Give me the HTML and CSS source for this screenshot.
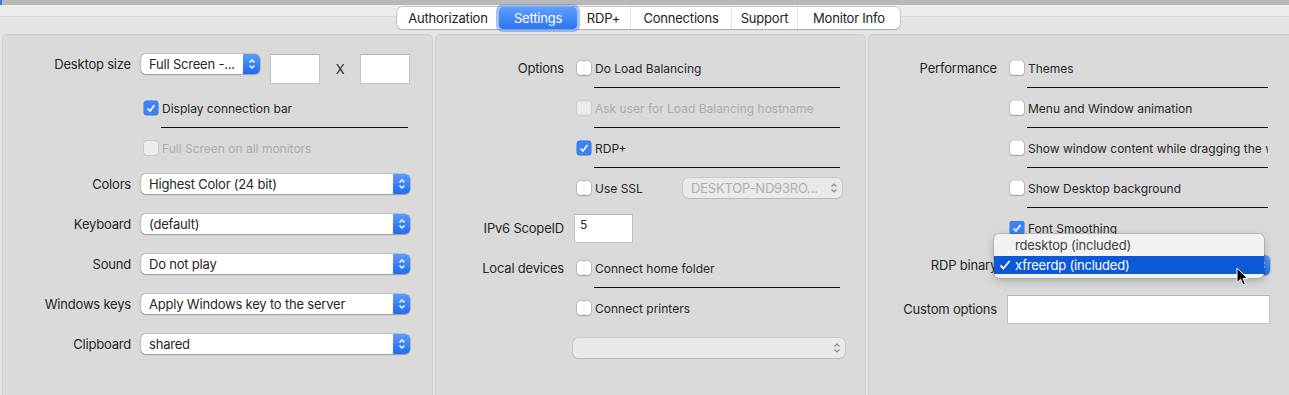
FILE: index.html
```html
<!DOCTYPE html>
<html>
<head>
<meta charset="utf-8">
<link rel="stylesheet" href="styles.css">
<title>Settings</title>
</head>
<body>
<div class="topbar"></div>
<div class="header">
  <div class="tabs">
    <div class="tab w-auth">Authorization</div>
    <div class="tab w-set sel">Settings</div>
    <div class="tab w-rdp nosep">RDP+</div>
    <div class="tab w-con">Connections</div>
    <div class="tab w-sup">Support</div>
    <div class="tab w-mon">Monitor Info</div>
  </div>
</div>

<div class="panels">
  <!-- left: display -->
  <div class="panel left">
    <div class="row first">
      <div class="lbl">Desktop size</div>
      <div class="ctl top">
        <div class="popup short"><span class="val">Full Screen -...</span><span class="arr"><svg width="8" height="12" viewBox="0 0 8 12"><path d="M1.5 4.5 L4 2 L6.5 4.5 M1.5 7.5 L4 10 L6.5 7.5" fill="none" stroke="#fff" stroke-width="1.3"/></svg></span></div>
        <div class="field size"></div>
        <div class="times">X</div>
        <div class="field size"></div>
      </div>
    </div>
    <div class="row ruled">
      <div class="lbl"></div>
      <div class="ctl"><div class="check on"><span class="box"><svg width="12" height="12" viewBox="0 0 12 12"><path d="M2.5 6.5 L5 9 L9.5 3" fill="none" stroke="#fff" stroke-width="1.7"/></svg></span>Display connection bar</div></div>
    </div>
    <div class="row short-row">
      <div class="lbl"></div>
      <div class="ctl"><div class="check dis"><span class="box"></span>Full Screen on all monitors</div></div>
    </div>
    <div class="row">
      <div class="lbl">Colors</div>
      <div class="ctl"><div class="popup"><span class="val">Highest Color (24 bit)</span><span class="arr"><svg width="8" height="12" viewBox="0 0 8 12"><path d="M1.5 4.5 L4 2 L6.5 4.5 M1.5 7.5 L4 10 L6.5 7.5" fill="none" stroke="#fff" stroke-width="1.3"/></svg></span></div></div>
    </div>
    <div class="row">
      <div class="lbl">Keyboard</div>
      <div class="ctl"><div class="popup"><span class="val">(default)</span><span class="arr"><svg width="8" height="12" viewBox="0 0 8 12"><path d="M1.5 4.5 L4 2 L6.5 4.5 M1.5 7.5 L4 10 L6.5 7.5" fill="none" stroke="#fff" stroke-width="1.3"/></svg></span></div></div>
    </div>
    <div class="row">
      <div class="lbl">Sound</div>
      <div class="ctl"><div class="popup"><span class="val">Do not play</span><span class="arr"><svg width="8" height="12" viewBox="0 0 8 12"><path d="M1.5 4.5 L4 2 L6.5 4.5 M1.5 7.5 L4 10 L6.5 7.5" fill="none" stroke="#fff" stroke-width="1.3"/></svg></span></div></div>
    </div>
    <div class="row">
      <div class="lbl">Windows keys</div>
      <div class="ctl"><div class="popup"><span class="val">Apply Windows key to the server</span><span class="arr"><svg width="8" height="12" viewBox="0 0 8 12"><path d="M1.5 4.5 L4 2 L6.5 4.5 M1.5 7.5 L4 10 L6.5 7.5" fill="none" stroke="#fff" stroke-width="1.3"/></svg></span></div></div>
    </div>
    <div class="row">
      <div class="lbl">Clipboard</div>
      <div class="ctl"><div class="popup"><span class="val">shared</span><span class="arr"><svg width="8" height="12" viewBox="0 0 8 12"><path d="M1.5 4.5 L4 2 L6.5 4.5 M1.5 7.5 L4 10 L6.5 7.5" fill="none" stroke="#fff" stroke-width="1.3"/></svg></span></div></div>
    </div>
  </div>

  <!-- middle: options -->
  <div class="panel mid">
    <div class="row ruled">
      <div class="lbl">Options</div>
      <div class="ctl"><div class="check"><span class="box"></span>Do Load Balancing</div></div>
    </div>
    <div class="row ruled">
      <div class="lbl"></div>
      <div class="ctl"><div class="check dis"><span class="box"></span>Ask user for Load Balancing hostname</div></div>
    </div>
    <div class="row ruled">
      <div class="lbl"></div>
      <div class="ctl"><div class="check on"><span class="box"><svg width="12" height="12" viewBox="0 0 12 12"><path d="M2.5 6.5 L5 9 L9.5 3" fill="none" stroke="#fff" stroke-width="1.7"/></svg></span>RDP+</div></div>
    </div>
    <div class="row">
      <div class="lbl"></div>
      <div class="ctl">
        <div class="check"><span class="box"></span>Use SSL</div>
        <div class="popup dis ssl"><span class="val">DESKTOP-ND93RO...</span><span class="arr"><svg width="8" height="12" viewBox="0 0 8 12"><path d="M1.5 4.5 L4 2 L6.5 4.5 M1.5 7.5 L4 10 L6.5 7.5" fill="none" stroke="#8a8a8a" stroke-width="1.1"/></svg></span></div>
      </div>
    </div>
    <div class="row">
      <div class="lbl">IPv6 ScopeID</div>
      <div class="ctl"><div class="field scope">5</div></div>
    </div>
    <div class="row ruled">
      <div class="lbl">Local devices</div>
      <div class="ctl"><div class="check"><span class="box"></span>Connect home folder</div></div>
    </div>
    <div class="row">
      <div class="lbl"></div>
      <div class="ctl"><div class="check"><span class="box"></span>Connect printers</div></div>
    </div>
    <div class="row">
      <div class="lbl"></div>
      <div class="ctl"><div class="popup dis wide"><span class="val"></span><span class="arr"><svg width="8" height="12" viewBox="0 0 8 12"><path d="M1.5 4.5 L4 2 L6.5 4.5 M1.5 7.5 L4 10 L6.5 7.5" fill="none" stroke="#8a8a8a" stroke-width="1.1"/></svg></span></div></div>
    </div>
  </div>

  <!-- right: performance -->
  <div class="panel right">
    <div class="row ruled">
      <div class="lbl">Performance</div>
      <div class="ctl"><div class="check"><span class="box"></span>Themes</div></div>
    </div>
    <div class="row ruled">
      <div class="lbl"></div>
      <div class="ctl"><div class="check"><span class="box"></span>Menu and Window animation</div></div>
    </div>
    <div class="row ruled">
      <div class="lbl"></div>
      <div class="ctl"><div class="check"><span class="box"></span>Show window content while dragging the window</div></div>
    </div>
    <div class="row ruled">
      <div class="lbl"></div>
      <div class="ctl"><div class="check"><span class="box"></span>Show Desktop background</div></div>
    </div>
    <div class="row">
      <div class="lbl"></div>
      <div class="ctl"><div class="check on"><span class="box"><svg width="12" height="12" viewBox="0 0 12 12"><path d="M2.5 6.5 L5 9 L9.5 3" fill="none" stroke="#fff" stroke-width="1.7"/></svg></span>Font Smoothing</div></div>
    </div>
    <div class="row binary-row">
      <div class="lbl">RDP binary</div>
      <div class="ctl"><div class="popup"><span class="val">xfreerdp (included)</span><span class="arr"><svg width="8" height="12" viewBox="0 0 8 12"><path d="M1.5 4.5 L4 2 L6.5 4.5 M1.5 7.5 L4 10 L6.5 7.5" fill="none" stroke="#fff" stroke-width="1.3"/></svg></span></div></div>
    </div>
    <div class="row custom-row">
      <div class="lbl">Custom options</div>
      <div class="ctl"><div class="field custom"></div></div>
    </div>
  </div>
</div>

<!-- open popup menu for RDP binary -->
<div class="menu">
  <div class="item"><span class="mark"></span>rdesktop (included)</div>
  <div class="item hi"><span class="mark"><svg width="12" height="12" viewBox="0 0 12 12"><path d="M1.5 6.5 L4.5 9.5 L10.5 2" fill="none" stroke="#fff" stroke-width="1.8"/></svg></span>xfreerdp (included)</div>
</div>

<svg class="cursor" width="13" height="20" viewBox="0 0 13 20"><path d="M1 1 L1 15.5 L4.6 12.2 L7 17.8 L9.3 16.8 L7 11.4 L11.6 11.4 Z" fill="#000" stroke="#fff" stroke-width="1"/></svg>
</body>
</html>
```

FILE: styles.css
```css
* {
    box-sizing: border-box;
}

html, body {
    margin: 0;
}

body {
    width: 1289px;
    height: 395px;
    overflow: hidden;
    position: relative;
    background: #e4e4e4;
    font-family: Inter, "Noto Sans", sans-serif;
    font-size: 13px;
    letter-spacing: -0.2px;
    color: #262626;
}

.topbar {
    height: 5px;
    background: #b8b8b8;
    border-left: 2px solid #2f7ef5;
}

.header {
    height: 29px;
    padding-top: 2px;
    background: linear-gradient(#ececec 0 11px, #d9d9d9 11px 12px, #e4e4e4 12px);
}

/* tab bar */
.tabs {
    display: flex;
    margin-left: 397px;
    width: 503px;
    height: 22px;
    background: #fff;
    border-radius: 5px;
    box-shadow: 0 0 0 0.5px rgba(0, 0, 0, .28), 0 1px 1px rgba(0, 0, 0, .12);
}

.tab {
    display: flex;
    align-items: center;
    justify-content: center;
    border-left: 1px solid #e2e2e2;
    color: #222;
}

.tab:first-child,
.tab.nosep {
    border-left: none;
}

.tab.sel {
    border-left: none;
    color: #fff;
    border-radius: 4px;
    background: linear-gradient(#5f9ffb, #2b73f6);
    box-shadow: 0 0 0 3px rgba(90, 145, 235, .55);
}

.w-auth { width: 102px; }
.w-set { width: 78px; }
.w-rdp { width: 53px; }
.w-con { width: 101px; }
.w-sup { width: 66px; }
.w-mon { width: 103px; }

/* panels */
.panels {
    display: flex;
    gap: 2px;
    padding-left: 2px;
}

.panel {
    flex: none;
    width: 431px;
    height: 380px;
    padding-top: 13px;
    background: #dadada;
    border: 1px solid #cfcfcf;
    border-radius: 5px;
}

.panel.left {
    padding-top: 9px;
}

.row {
    display: flex;
    align-items: center;
    height: 40px;
}

.row.first {
    height: 44px;
    align-items: flex-start;
    padding-top: 10px;
}

.row.first .lbl {
    line-height: 20px;
}

.row.short-row {
    height: 36px;
    padding-top: 4px;
}

.row.binary-row {
    height: 34px;
}

.row.custom-row {
    height: 54px;
}

.lbl {
    flex: none;
    width: 128px;
    margin-right: 10px;
    text-align: right;
    white-space: nowrap;
}

.ctl {
    flex: none;
    display: flex;
    align-items: center;
    width: 269px;
    height: 100%;
    white-space: nowrap;
}

.ctl.top {
    align-items: flex-start;
}

.mid .ctl {
    width: 268px;
}

.right .ctl {
    width: 263px;
}

.right .check {
    max-width: 261px;
    overflow: hidden;
}

.ruled .ctl {
    background: linear-gradient(#111, #111) no-repeat left 20px bottom / 241px 1px;
}

.left .ruled .ctl,
.mid .ruled .ctl {
    background-size: calc(100% - 22px) 1px;
}

/* checkboxes */
.check {
    display: flex;
    align-items: center;
    gap: 4px;
    font-size: 12px;
    letter-spacing: 0;
}

.check .box {
    flex: none;
    display: flex;
    align-items: center;
    justify-content: center;
    width: 14px;
    height: 14px;
    margin-left: 3px;
    background: #fff;
    border-radius: 3px;
    box-shadow: 0 0 0 0.5px rgba(0, 0, 0, .3), 0 0.5px 1px rgba(0, 0, 0, .15);
}

.check.on .box {
    background: #3a82f7;
    box-shadow: 0 0 0 0.5px #2f6fe0;
}

.check.dis {
    color: #ababab;
}

.check.dis .box {
    background: #ececec;
    box-shadow: 0 0 0 0.5px rgba(0, 0, 0, .15);
}

/* popup buttons */
.popup {
    display: flex;
    width: 100%;
    height: 20px;
    background: #fff;
    border-radius: 5px;
    box-shadow: 0 0 0 0.5px rgba(0, 0, 0, .25), 0 1px 1.5px rgba(0, 0, 0, .18);
}

.popup .val {
    flex: 1;
    padding-left: 8px;
    line-height: 20px;
    overflow: hidden;
}

.popup .arr {
    flex: none;
    display: flex;
    align-items: center;
    justify-content: center;
    width: 17px;
    border-radius: 0 5px 5px 0;
    background: linear-gradient(#5a9cfb, #1e6bf3);
}

.popup.short {
    flex: none;
    width: 119px;
}

.popup.dis {
    background: #e9e9e9;
    color: #b0b0b0;
    box-shadow: 0 0 0 0.5px rgba(0, 0, 0, .14), 0 0.5px 1px rgba(0, 0, 0, .08);
}

.popup.dis .arr {
    background: none;
}

.popup.ssl {
    flex: none;
    width: 159px;
    margin-left: auto;
}

.popup.wide {
    flex: none;
    width: 272px;
    margin-left: -1px;
}

/* text fields */
.field {
    flex: none;
    height: 30px;
    background: #fff;
    border: 1px solid #c2c2c2;
    border-top-color: #b4b4b4;
}

.field.size {
    width: 50px;
}

.ctl.top .field.size:nth-of-type(2) {
    margin-left: 10px;
}

.times {
    width: 40px;
    height: 30px;
    line-height: 30px;
    text-align: center;
}

.field.scope {
    width: 59px;
    height: 29px;
    padding: 2px 5px;
    font-size: 12px;
}

.field.custom {
    width: 263px;
    height: 29px;
}

/* open menu */
.menu {
    position: absolute;
    left: 994px;
    top: 234px;
    width: 270px;
    padding: 2px 0 4px;
    background: #f2f2f2;
    border-radius: 5px;
    box-shadow: 0 0 0 0.5px rgba(0, 0, 0, .22), 0 3px 10px rgba(0, 0, 0, .22);
}

.item {
    display: flex;
    align-items: center;
    height: 18px;
    color: #404040;
}

.item + .item {
    margin-top: 2px;
}

.item.hi {
    background: #0b58d8;
    color: #fff;
}

.item .mark {
    display: flex;
    align-items: center;
    justify-content: center;
    width: 21px;
}

.cursor {
    position: absolute;
    left: 1236px;
    top: 267px;
}
```
